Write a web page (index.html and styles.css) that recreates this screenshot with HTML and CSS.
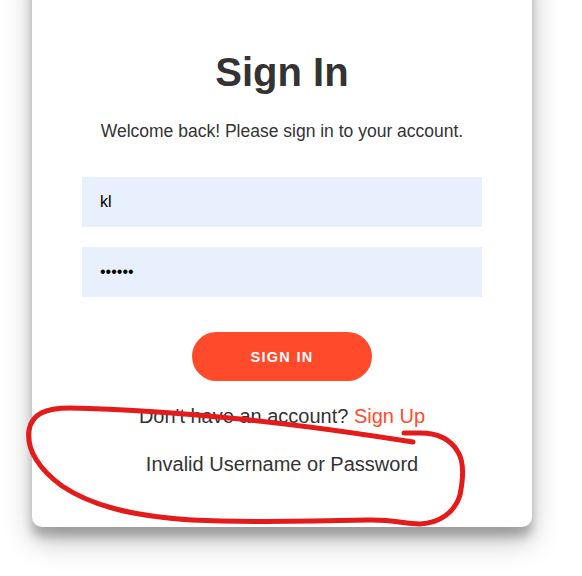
FILE: index.html
```html
<!DOCTYPE html>
<html lang="en">
<head>
<meta charset="utf-8">
<title>Sign In</title>
<link rel="stylesheet" href="styles.css">
</head>
<body>
<div class="page">
  <form class="card" onsubmit="return false">
    <h1 class="title">Sign In</h1>
    <p class="subtitle">Welcome back! Please sign in to your account.</p>
    <input class="field" type="text" value="kl">
    <input class="field field-gap" type="password" value="kl1234">
    <button class="btn" type="submit">Sign In</button>
    <p class="switch">Don't have an account? <a class="link" href="#">Sign Up</a></p>
    <p class="error">Invalid Username or Password</p>
  </form>
  <svg class="scribble" width="582" height="576" viewBox="0 0 582 576">
    <path d="M413 442 C 350 432, 290 424, 240 419 C 180 413, 120 409, 70 408 C 45 408, 32 414, 29 430 C 26 450, 40 470, 62 486 C 92 506, 132 516, 192 520 C 252 523, 330 521, 372 520 C 395 520, 405 524, 420 524 C 440 523, 455 512, 460 495 C 464 475, 463 460, 458 452 C 450 438, 435 433, 420 433 L 404 433" />
  </svg>
</div>
</body>
</html>
```

FILE: styles.css
```css
html, body {
  margin: 0;
  padding: 0;
  background: #ffffff;
}

.page {
  position: relative;
  display: flow-root;
  width: 582px;
  height: 576px;
  padding-left: 32px;
  box-sizing: border-box;
  font-family: "Liberation Sans", Arial, sans-serif;
  color: #333333;
}

.card {
  width: 500px;
  margin-top: -40px;
  padding: 89px 50px 51px;
  box-sizing: border-box;
  background: #ffffff;
  border-radius: 10px;
  box-shadow: 0 14px 28px rgba(0, 0, 0, 0.25), 0 10px 10px rgba(0, 0, 0, 0.22);
  display: flex;
  flex-direction: column;
  align-items: center;
  text-align: center;
}

.title {
  margin: 0;
  font-size: 40px;
  line-height: 46px;
  font-weight: 700;
  color: #333333;
}

.subtitle {
  margin: 24px 0 0;
  font-size: 17.5px;
  line-height: 24px;
  color: #333333;
}

.field {
  display: block;
  width: 400px;
  height: 50px;
  margin: 34px 0 0;
  padding: 0 18px;
  box-sizing: border-box;
  border: none;
  outline: none;
  background: #e8f0fe;
  font-family: "Liberation Sans", Arial, sans-serif;
  font-size: 16px;
  color: #000000;
}

.field-gap {
  margin-top: 20px;
}

.btn {
  margin-top: 35px;
  width: 180px;
  height: 49px;
  border: none;
  border-radius: 25px;
  background: #ff4b2b;
  color: #ffffff;
  font-family: "Liberation Sans", Arial, sans-serif;
  font-size: 14.5px;
  font-weight: 700;
  letter-spacing: 1.3px;
  text-transform: uppercase;
  padding: 0;
}

.switch {
  margin: 23px 0 0;
  font-size: 20px;
  line-height: 24px;
  color: #333333;
}

.link {
  color: #ff4b2b;
  text-decoration: none;
}

.error {
  margin: 24px 0 0;
  font-size: 20px;
  line-height: 24px;
  color: #333333;
}

.scribble {
  position: absolute;
  left: 0;
  top: 0;
  pointer-events: none;
}

.scribble path {
  fill: none;
  stroke: #e31b1b;
  stroke-width: 5;
  stroke-linecap: round;
  stroke-linejoin: round;
}
```
